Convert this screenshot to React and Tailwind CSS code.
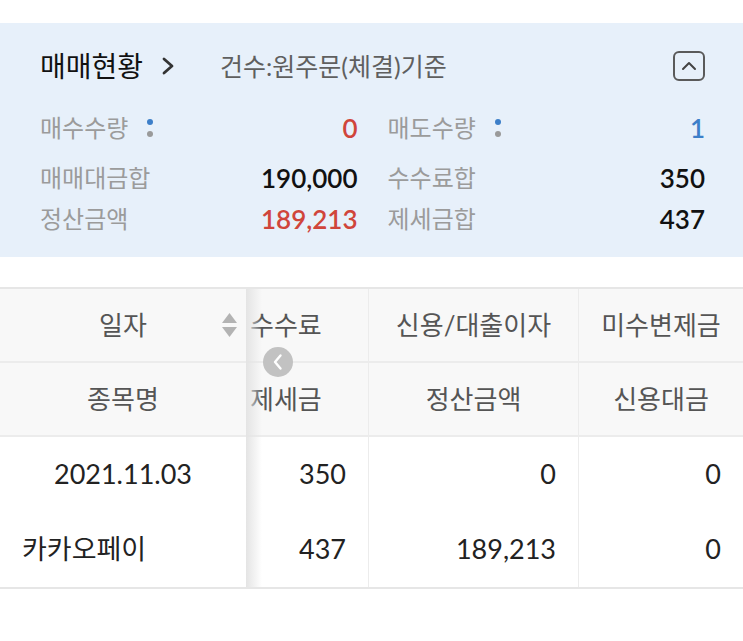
import React from 'react';

const font = { fontFamily: "Lato, 'Noto Sans CJK KR', sans-serif" };

const Dots = () => (
  <span className="ml-[19px] inline-flex flex-col items-center justify-center gap-[6px]">
    <span className="w-[6px] h-[6px] rounded-full bg-[#3d7fc9]" />
    <span className="w-[6px] h-[6px] rounded-full bg-[#9a9a9a]" />
  </span>
);

const StatRow = ({ label, value, valueClass, dots, className }) => (
  <div className={`flex items-center justify-between h-[34px] ${className || ''}`}>
    <div className="flex items-center text-[24px] text-[#9b9b9b] leading-none">
      {label}
      {dots && <Dots />}
    </div>
    <div className={`text-[26px] font-semibold leading-none ${valueClass}`}>{value}</div>
  </div>
);

const SortIcon = () => (
  <svg width="17" height="28" viewBox="0 0 17 28" className="absolute right-[8px] top-1/2 -translate-y-1/2">
    <path d="M8.5 2 L16 12 L1 12 Z" fill="#b3b3b3" />
    <path d="M8.5 26 L16 16 L1 16 Z" fill="#b3b3b3" />
  </svg>
);

export default function App() {
  const headCell = 'h-[74px] flex items-center text-[26px] text-[#555] bg-[#f8f8f8]';
  const bodyCell = 'h-[75px] flex items-center text-[27px] text-[#222]';

  return (
    <div className="w-[743px] h-[641px] bg-white overflow-hidden" style={font}>
      <div className="pt-[23px]">
        <section className="h-[234px] bg-[#e7f0fa] pl-[40px] pr-[38px] pt-[28px]">
          <div className="flex items-center h-[30px]">
            <h2 className="text-[28px] text-[#111] font-normal leading-none">매매현황</h2>
            <svg width="14" height="20" viewBox="0 0 14 20" className="ml-[18px]">
              <path d="M3 3 L11 10 L3 17" stroke="#333" strokeWidth="2.8" fill="none" strokeLinecap="round" strokeLinejoin="round" />
            </svg>
            <span className="ml-[45px] text-[25px] text-[#5f5f5f] leading-none">건수:원주문(체결)기준</span>
            <button className="ml-auto w-[32px] h-[30px] border-2 border-[#5a5a5a] rounded-[6px] flex items-center justify-center">
              <svg width="16" height="10" viewBox="0 0 16 10">
                <path d="M2 8 L8 2 L14 8" stroke="#444" strokeWidth="2" fill="none" strokeLinecap="round" strokeLinejoin="round" />
              </svg>
            </button>
          </div>

          <div className="grid grid-cols-2 gap-x-[30px] mt-[30px]">
            <StatRow label="매수수량" value="0" valueClass="text-[#d0453b]" dots />
            <StatRow label="매도수량" value="1" valueClass="text-[#3d7fc9]" dots />
            <StatRow className="mt-[16px]" label="매매대금합" value="190,000" valueClass="text-[#111]" />
            <StatRow className="mt-[16px]" label="수수료합" value="350" valueClass="text-[#111]" />
            <StatRow className="mt-[7px]" label="정산금액" value="189,213" valueClass="text-[#d0453b]" />
            <StatRow className="mt-[7px]" label="제세금합" value="437" valueClass="text-[#111]" />
          </div>
        </section>
      </div>

      <div className="relative mt-[30px] border-t-2 border-b-2 border-[#e6e6e6]">
        <div className="grid grid-cols-[246px_122px_210px_165px]">
          <div className={`${headCell} relative justify-center border-b-2 border-[#ececec]`}>
            일자
            <SortIcon />
          </div>
          <div className={`${headCell} pl-[4px] border-b-2 border-[#ececec]`}>수수료</div>
          <div className={`${headCell} justify-center border-b-2 border-l border-[#ececec]`}>신용/대출이자</div>
          <div className={`${headCell} justify-center border-b-2 border-l border-[#ececec]`}>미수변제금</div>

          <div className={`${headCell} justify-center border-b-2 border-[#ececec]`}>종목명</div>
          <div className={`${headCell} pl-[4px] border-b-2 border-[#ececec]`}>제세금</div>
          <div className={`${headCell} justify-center border-b-2 border-l border-[#ececec]`}>정산금액</div>
          <div className={`${headCell} justify-center border-b-2 border-l border-[#ececec]`}>신용대금</div>

          <div className={`${bodyCell} justify-center`}>2021.11.03</div>
          <div className={`${bodyCell} justify-end pr-[22px]`}>350</div>
          <div className={`${bodyCell} justify-end pr-[22px] border-l border-[#ececec]`}>0</div>
          <div className={`${bodyCell} justify-end pr-[22px] border-l border-[#ececec]`}>0</div>

          <div className={`${bodyCell} pl-[22px]`}>카카오페이</div>
          <div className={`${bodyCell} justify-end pr-[22px]`}>437</div>
          <div className={`${bodyCell} justify-end pr-[22px] border-l border-[#ececec]`}>189,213</div>
          <div className={`${bodyCell} justify-end pr-[22px] border-l border-[#ececec]`}>0</div>
        </div>

        <div className="absolute top-0 bottom-0 left-[246px] w-[16px] bg-gradient-to-r from-[#e4e4e4] to-transparent pointer-events-none" />

        <button className="absolute left-[263px] top-[58px] w-[30px] h-[30px] rounded-full bg-[#c2c2c2] flex items-center justify-center">
          <svg width="12" height="18" viewBox="0 0 12 18">
            <path d="M8.5 2.5 L3 9 L8.5 15.5" stroke="#fff" strokeWidth="2.4" fill="none" strokeLinecap="round" strokeLinejoin="round" />
          </svg>
        </button>
      </div>
    </div>
  );
}
